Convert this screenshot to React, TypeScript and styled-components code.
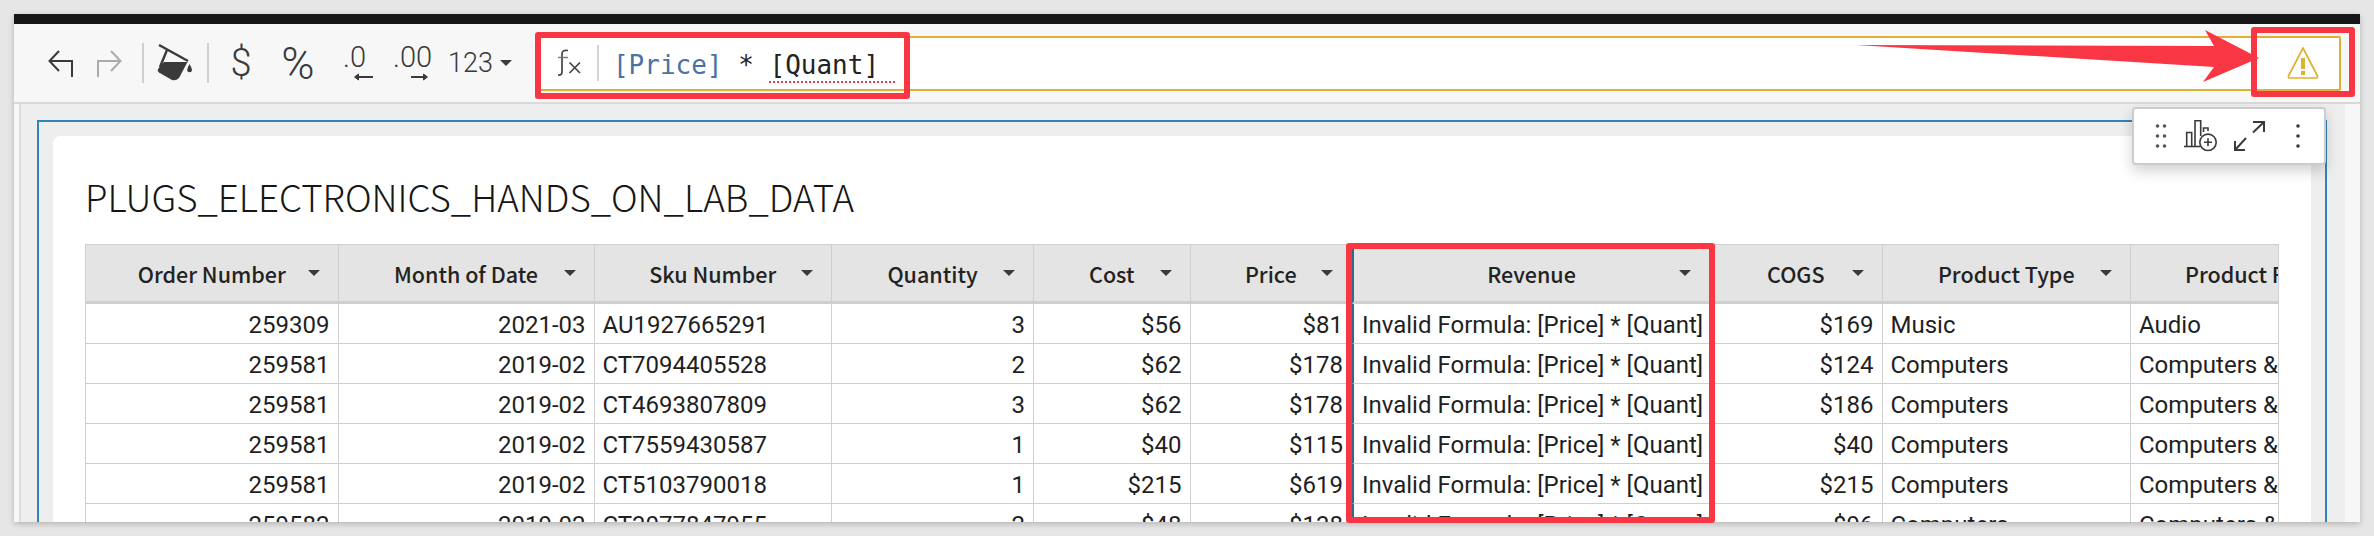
import React from 'react';
import styled, { createGlobalStyle } from 'styled-components';

const GlobalStyle = createGlobalStyle`
  html, body {
    margin: 0;
    padding: 0;
    background: #e6e6e6;
  }
`;

const Page = styled.div`
  position: relative;
  width: 2374px;
  height: 536px;
  overflow: hidden;
  background: #e6e6e6;
  padding: 14px 0 0 14px;
  box-sizing: border-box;
`;

const Window = styled.div`
  width: 2346px;
  height: 508px;
  display: flex;
  flex-direction: column;
  overflow: hidden;
  background: #f7f7f7;
  box-shadow: 0 2px 6px rgba(0, 0, 0, 0.22);
`;

const TopBar = styled.div`
  height: 10px;
  flex: none;
  background: #161616;
`;

const Toolbar = styled.div`
  height: 80px;
  flex: none;
  box-sizing: border-box;
  display: flex;
  align-items: center;
  padding-left: 34px;
  background: #f7f7f7;
  border-bottom: 2px solid #d9d9d9;
  color: #3a3a3a;
`;

const ToolItem = styled.div<{ $left?: number }>`
  flex: none;
  display: flex;
  align-items: center;
  margin-left: ${p => p.$left ?? 0}px;
  svg {
    display: block;
  }
`;

const ToolDivider = styled.div<{ $left: number }>`
  flex: none;
  width: 2px;
  height: 40px;
  margin-left: ${p => p.$left}px;
  background: #cfcfcf;
`;

const SymbolText = styled.span<{ $size: number; $width: number }>`
  display: block;
  width: ${p => p.$width}px;
  text-align: center;
  font-family: 'Roboto', sans-serif;
  font-weight: 300;
  font-size: ${p => p.$size}px;
  line-height: 1;
`;

const DecimalStack = styled.div<{ $width: number; $arrowLeft: number }>`
  display: flex;
  flex-direction: column;
  width: ${p => p.$width}px;
  font-family: 'Roboto', sans-serif;
  font-weight: 300;
  font-size: 29px;
  line-height: 27px;
  svg {
    margin: 1px 0 0 ${p => p.$arrowLeft}px;
  }
`;

const FormatLabel = styled.span`
  font-family: 'Roboto', sans-serif;
  font-weight: 300;
  font-size: 27px;
  line-height: 1;
`;

const FormulaBar = styled.div`
  flex: none;
  width: 1802px;
  height: 55px;
  box-sizing: border-box;
  margin-left: 27px;
  display: flex;
  align-items: center;
  background: #fff;
  border: 2px solid #e0b030;
  border-radius: 2px;
  padding: 0 20px 0 17px;
`;

const FxDivider = styled.div`
  width: 2px;
  height: 36px;
  margin: 0 14px 0 15px;
  background: #d4d4d4;
`;

const FormulaText = styled.div`
  flex: 1;
  padding-top: 3px;
  font-family: 'DejaVu Sans Mono', monospace;
  font-size: 26px;
  line-height: 36px;
  color: #222;
  white-space: pre;
`;

const ColumnRef = styled.span`
  color: #4a72a4;
`;

const BadRef = styled.span`
  display: inline-block;
  line-height: 32px;
  padding-right: 16px;
  border-bottom: 2px dotted #ee4040;
`;

const Main = styled.div`
  flex: 1;
  min-height: 0;
  display: flex;
`;

const LeftRail = styled.div`
  width: 5px;
  flex: none;
  background: #f7f7f7;
  border-right: 2px solid #dcdcdc;
`;

const Canvas = styled.div`
  flex: 1;
  min-width: 0;
  background: #eeeeee;
  padding: 16px 18px 0 16px;
`;

const RightRail = styled.div`
  width: 15px;
  flex: none;
  background: #f7f7f7;
`;

const Frame = styled.div`
  height: 100%;
  box-sizing: border-box;
  border: 2px solid #2d86b5;
  border-bottom: none;
  padding: 14px 14px 0 14px;
`;

const Card = styled.div`
  height: 100%;
  box-sizing: border-box;
  background: #fff;
  border-radius: 8px 8px 0 0;
  padding: 35px 33px 0 32px;
  overflow: hidden;
`;

const Title = styled.h2`
  margin: 0 0 23px 0;
  height: 50px;
  font-family: 'Noto Sans CJK SC', 'Noto Sans', sans-serif;
  font-weight: 300;
  font-size: 36.7px;
  line-height: 50px;
  color: #161616;
  white-space: nowrap;
`;

const TableViewport = styled.div`
  width: 2194px;
  box-sizing: border-box;
  overflow: hidden;
  border-right: 1px solid #cfcfcf;
`;

const Table = styled.table`
  table-layout: fixed;
  border-collapse: separate;
  border-spacing: 0;
  width: 2310px;
`;

const Col = styled.col<{ $width: number }>`
  width: ${p => p.$width}px;
`;

const HeaderCell = styled.th<{ $selected?: boolean }>`
  height: 60px;
  box-sizing: border-box;
  padding: 0;
  background: #e4e4e4;
  border-top: 1px solid #cfcfcf;
  border-right: 1px solid #cfcfcf;
  border-bottom: 3px solid #cfcfcf;
  border-left: ${p => (p.$selected ? '2px solid #2d6a8e' : 'none')};
  &:first-child {
    border-left: 1px solid #cfcfcf;
  }
`;

const HeaderInner = styled.div`
  display: grid;
  grid-template-columns: 48px 1fr 48px;
  align-items: center;
  overflow: hidden;
`;

const HeaderLabel = styled.span`
  grid-column: 2;
  font-family: 'Noto Sans CJK SC', 'Noto Sans', sans-serif;
  font-weight: 500;
  font-size: 21.5px;
  color: #222;
  text-align: center;
  white-space: nowrap;
`;

const Caret = styled.span`
  justify-self: center;
  width: 0;
  height: 0;
  border-left: 6.5px solid transparent;
  border-right: 6.5px solid transparent;
  border-top: 6.5px solid #3a3a3a;
`;

const Cell = styled.td<{ $align: string; $selected?: boolean }>`
  height: 40px;
  box-sizing: border-box;
  padding: 3px 8px 0;
  overflow: hidden;
  white-space: nowrap;
  background: #fff;
  text-align: ${p => p.$align};
  font-family: 'Roboto', sans-serif;
  font-size: 24px;
  color: #1f1f1f;
  border-right: 1px solid #cfcfcf;
  border-bottom: 1px solid #cfcfcf;
  border-left: ${p => (p.$selected ? '2px solid #2d6a8e' : 'none')};
  &:first-child {
    border-left: 1px solid #cfcfcf;
  }
`;

const Popup = styled.div`
  position: absolute;
  left: 2132px;
  top: 107px;
  width: 194px;
  height: 58px;
  box-sizing: border-box;
  display: flex;
  align-items: center;
  padding-left: 21px;
  background: #fff;
  border: 2px solid #cccccc;
  border-radius: 4px;
  box-shadow: 0 6px 14px rgba(0, 0, 0, 0.18);
`;

const Callout = styled.div<{ $x: number; $y: number; $w: number; $h: number }>`
  position: absolute;
  left: ${p => p.$x}px;
  top: ${p => p.$y}px;
  width: ${p => p.$w}px;
  height: ${p => p.$h}px;
  box-sizing: border-box;
  border: 6px solid #f93744;
  border-radius: 3px;
  pointer-events: none;
`;

const ArrowLayer = styled.svg`
  position: absolute;
  left: 0;
  top: 0;
  pointer-events: none;
`;

const UndoIcon = () => (
  <svg width="25" height="27" viewBox="0 0 25 27" fill="none" stroke="#3a3a3a" strokeWidth="2">
    <path d="M11 1 L1.500 11 L11 21" />
    <path d="M1.500 11 H24 V27" />
  </svg>
);

const RedoIcon = () => (
  <svg width="25" height="27" viewBox="0 0 25 27" fill="none" stroke="#ababab" strokeWidth="2">
    <path d="M14 1 L23.500 11 L14 21" />
    <path d="M23.500 11 H1 V27" />
  </svg>
);

const BucketIcon = () => (
  <svg width="36" height="38" viewBox="0 0 36 38">
    <path d="M2 1 L31 17" stroke="#3a3a3a" strokeWidth="2.400" fill="none" />
    <path d="M10 6 L3 23" stroke="#3a3a3a" strokeWidth="2.400" fill="none" />
    <path d="M7 18 L30.500 18 L22 34 Q19 37 15 36 L2 28.500 Q0 27 1 25 Z" fill="#3a3a3a" />
    <path d="M32.500 20 Q36 26 34.500 27.500 Q32.500 29 30.500 27.500 Q29.500 25.500 32.500 20 Z" fill="#3a3a3a" />
  </svg>
);

const LeftArrow = () => (
  <svg width="20" height="10" viewBox="0 0 20 10" fill="#3a3a3a" stroke="#3a3a3a" strokeWidth="2">
    <path d="M20 5 H3" />
    <path d="M5.500 2 L1.500 5 L5.500 8 Z" strokeWidth="1" />
  </svg>
);

const RightArrow = () => (
  <svg width="18" height="10" viewBox="0 0 18 10" fill="#3a3a3a" stroke="#3a3a3a" strokeWidth="2">
    <path d="M0 5 H15" />
    <path d="M12.500 2 L16.500 5 L12.500 8 Z" strokeWidth="1" />
  </svg>
);

const FxIcon = () => (
  <svg width="24" height="28" viewBox="0 0 24 28" fill="none" stroke="#444" strokeWidth="1.700">
    <path d="M10 1.500 Q4 0.500 4 5 V23 Q4 26.500 0 26" />
    <path d="M0 8.500 H10" stroke="#777" strokeWidth="1.400" />
    <path d="M11.500 13.500 L22 24 M22 13.500 L11.500 24" />
  </svg>
);

const WarningIcon = () => (
  <svg width="32" height="34" viewBox="0 0 32 34" fill="none">
    <path d="M16 2 L30.500 30 Q31 32 29 32 L3 32 Q1 32 1.500 30 Z" stroke="#e0b030" strokeWidth="1.700" strokeLinejoin="round" />
    <rect x="14" y="12" width="4" height="11" fill="#e0b030" />
    <rect x="14" y="25" width="4" height="4" fill="#e0b030" />
  </svg>
);

const GripIcon = () => (
  <svg width="12" height="26" viewBox="0 0 12 26" fill="#555">
    {[3, 13, 23].map(y => (
      <React.Fragment key={y}>
        <circle cx="2.500" cy={y} r="1.800" />
        <circle cx="9.500" cy={y} r="1.800" />
      </React.Fragment>
    ))}
  </svg>
);

const AddChartIcon = () => (
  <svg width="34" height="32" viewBox="0 0 34 32" fill="none" stroke="#3a3a3a" strokeWidth="1.600">
    <path d="M0 26.500 H16" />
    <path d="M2.700 26.500 V12.500 H7.700 V26.500" />
    <path d="M11 26.500 V0.800 H16.700 V16" />
    <path d="M19.500 12 V8 H24 V11" />
    <circle cx="24" cy="22.300" r="8.200" fill="#fff" />
    <path d="M24 18.300 V26.300 M20 22.300 H28" />
  </svg>
);

const ExpandIcon = () => (
  <svg width="32" height="31" viewBox="0 0 32 31" fill="none" stroke="#3a3a3a" strokeWidth="2">
    <path d="M1 29 L12 17" />
    <path d="M1 20 V29 H11" />
    <path d="M19 11.500 L30 1" />
    <path d="M19 1 H30 V11" />
  </svg>
);

const MoreIcon = () => (
  <svg width="6" height="26" viewBox="0 0 6 26" fill="#3a3a3a">
    <circle cx="3" cy="3" r="1.800" />
    <circle cx="3" cy="13" r="1.800" />
    <circle cx="3" cy="23" r="1.800" />
  </svg>
);

const columns = [
  { label: 'Order Number', width: 253.5, align: 'right' },
  { label: 'Month of Date', width: 256, align: 'right' },
  { label: 'Sku Number', width: 237.5, align: 'left' },
  { label: 'Quantity', width: 202, align: 'right' },
  { label: 'Cost', width: 156.5, align: 'right' },
  { label: 'Price', width: 161.5, align: 'right' },
  { label: 'Revenue', width: 358, align: 'left', selected: true },
  { label: 'COGS', width: 172.5, align: 'right' },
  { label: 'Product Type', width: 248.5, align: 'left' },
  { label: 'Product Family', width: 264, align: 'left' },
];

const INVALID = 'Invalid Formula: [Price] * [Quant]';
const FAMILY = 'Computers & Accessories';

const rows = [
  ['259309', '2021-03', 'AU1927665291', '3', '$56', '$81', INVALID, '$169', 'Music', 'Audio'],
  ['259581', '2019-02', 'CT7094405528', '2', '$62', '$178', INVALID, '$124', 'Computers', FAMILY],
  ['259581', '2019-02', 'CT4693807809', '3', '$62', '$178', INVALID, '$186', 'Computers', FAMILY],
  ['259581', '2019-02', 'CT7559430587', '1', '$40', '$115', INVALID, '$40', 'Computers', FAMILY],
  ['259581', '2019-02', 'CT5103790018', '1', '$215', '$619', INVALID, '$215', 'Computers', FAMILY],
  ['259582', '2019-02', 'CT3077847955', '2', '$48', '$138', INVALID, '$96', 'Computers', FAMILY],
];

export default function App() {
  return (
    <>
      <GlobalStyle />
      <Page>
        <Window>
          <TopBar />
          <Toolbar>
            <ToolItem><UndoIcon /></ToolItem>
            <ToolItem $left={24}><RedoIcon /></ToolItem>
            <ToolDivider $left={20} />
            <ToolItem $left={13}><BucketIcon /></ToolItem>
            <ToolDivider $left={14} />
            <ToolItem $left={21}><SymbolText $size={38} $width={22}>$</SymbolText></ToolItem>
            <ToolItem $left={29}><SymbolText $size={45} $width={34}>%</SymbolText></ToolItem>
            <ToolItem $left={28}>
              <DecimalStack $width={32} $arrowLeft={10}>
                <span>.0</span>
                <LeftArrow />
              </DecimalStack>
            </ToolItem>
            <ToolItem $left={18}>
              <DecimalStack $width={38} $arrowLeft={18}>
                <span>.00</span>
                <RightArrow />
              </DecimalStack>
            </ToolItem>
            <ToolItem $left={17}>
              <FormatLabel>123</FormatLabel>
            </ToolItem>
            <ToolItem $left={7}><Caret /></ToolItem>
            <FormulaBar>
              <FxIcon />
              <FxDivider />
              <FormulaText>
                <ColumnRef>[Price]</ColumnRef> * <BadRef>[Quant]</BadRef>
              </FormulaText>
              <WarningIcon />
            </FormulaBar>
          </Toolbar>
          <Main>
            <LeftRail />
            <Canvas>
              <Frame>
                <Card>
                  <Title>PLUGS_ELECTRONICS_HANDS_ON_LAB_DATA</Title>
                  <TableViewport>
                    <Table>
                      <colgroup>
                        {columns.map(c => <Col key={c.label} $width={c.width} />)}
                      </colgroup>
                      <thead>
                        <tr>
                          {columns.map(c => (
                            <HeaderCell key={c.label} $selected={c.selected}>
                              <HeaderInner>
                                <HeaderLabel>{c.label}</HeaderLabel>
                                <Caret />
                              </HeaderInner>
                            </HeaderCell>
                          ))}
                        </tr>
                      </thead>
                      <tbody>
                        {rows.map((row, i) => (
                          <tr key={i}>
                            {row.map((value, j) => (
                              <Cell key={j} $align={columns[j].align} $selected={columns[j].selected}>
                                {value}
                              </Cell>
                            ))}
                          </tr>
                        ))}
                      </tbody>
                    </Table>
                  </TableViewport>
                </Card>
              </Frame>
            </Canvas>
            <RightRail />
          </Main>
        </Window>

        <Popup>
          <GripIcon />
          <ToolItem $left={17}><AddChartIcon /></ToolItem>
          <ToolItem $left={16}><ExpandIcon /></ToolItem>
          <ToolItem $left={29}><MoreIcon /></ToolItem>
        </Popup>

        <Callout $x={535} $y={32} $w={375} $h={67} />
        <Callout $x={2251} $y={27} $w={104} $h={70} />
        <Callout $x={1346} $y={243} $w={369} $h={280} />
        <ArrowLayer width="2374" height="536">
          <polygon points="1856,45 2214,46 2205,30 2259,58 2203,82 2214,67" fill="#f93744" />
        </ArrowLayer>
      </Page>
    </>
  );
}
